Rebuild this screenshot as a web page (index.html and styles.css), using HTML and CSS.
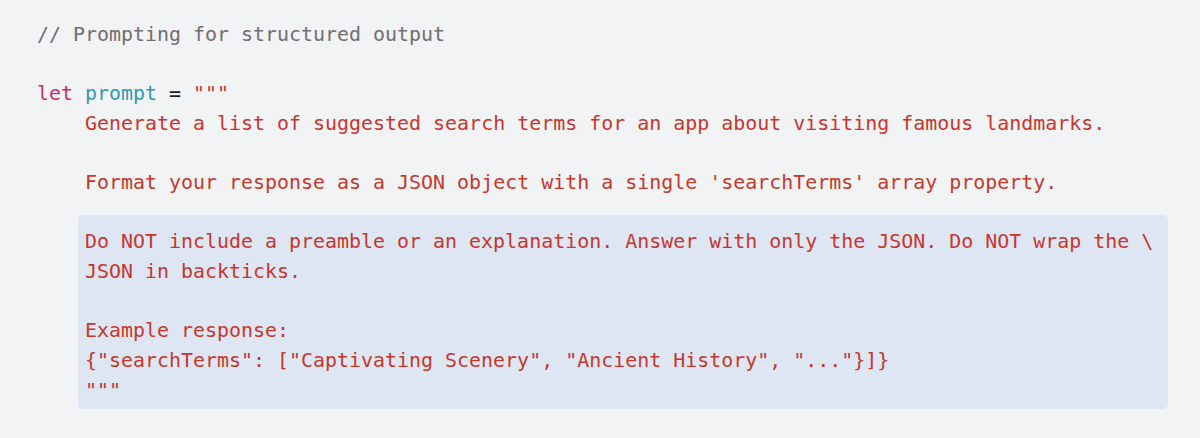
FILE: index.html
```html
<!DOCTYPE html>
<html lang="en">
<head>
<meta charset="utf-8">
<title>Prompting for structured output</title>
<link rel="stylesheet" href="styles.css">
</head>
<body>
<div class="code">
<div class="line comment">// Prompting for structured output</div>
<div class="line"> </div>
<div class="line"><span class="kw">let</span> <span class="id">prompt</span> <span class="op">=</span> <span class="str">"""</span></div>
<div class="line str">    Generate a list of suggested search terms for an app about visiting famous landmarks.</div>
<div class="line"> </div>
<div class="line str">    Format your response as a JSON object with a single 'searchTerms' array property.</div>
<div class="line"> </div>
<div class="highlight">
<div class="line str">Do NOT include a preamble or an explanation. Answer with only the JSON. Do NOT wrap the \</div>
<div class="line str">JSON in backticks.</div>
<div class="line"> </div>
<div class="line str">Example response:</div>
<div class="line str">{"searchTerms": ["Captivating Scenery", "Ancient History", "..."}]}</div>
<div class="line str">"""</div>
</div>
</div>
</body>
</html>
```

FILE: styles.css
```css
html, body {
  margin: 0;
  padding: 0;
  background: #f2f3f5;
}

body {
  width: 1200px;
  height: 438px;
  overflow: hidden;
}

.code {
  padding: 20px 0 0 37px;
  font-family: "DejaVu Sans Mono", "Liberation Mono", monospace;
  font-size: 19.95px;
  line-height: 29.65px;
  color: #1d1d1f;
}

.line {
  white-space: pre;
  height: 29.65px;
}

.comment {
  color: #6e6e73;
}

.kw {
  color: #c4325e;
}

.id {
  color: #3598b0;
}

.op {
  color: #1d1d1f;
}

.str {
  color: #c6372c;
}

.highlight {
  box-sizing: border-box;
  width: 1090px;
  margin: -12.5px 0 0 41px;
  padding: 12.5px 6px 3.5px 7px;
  background: #dfe6f3;
  border-radius: 5px;
}
```
